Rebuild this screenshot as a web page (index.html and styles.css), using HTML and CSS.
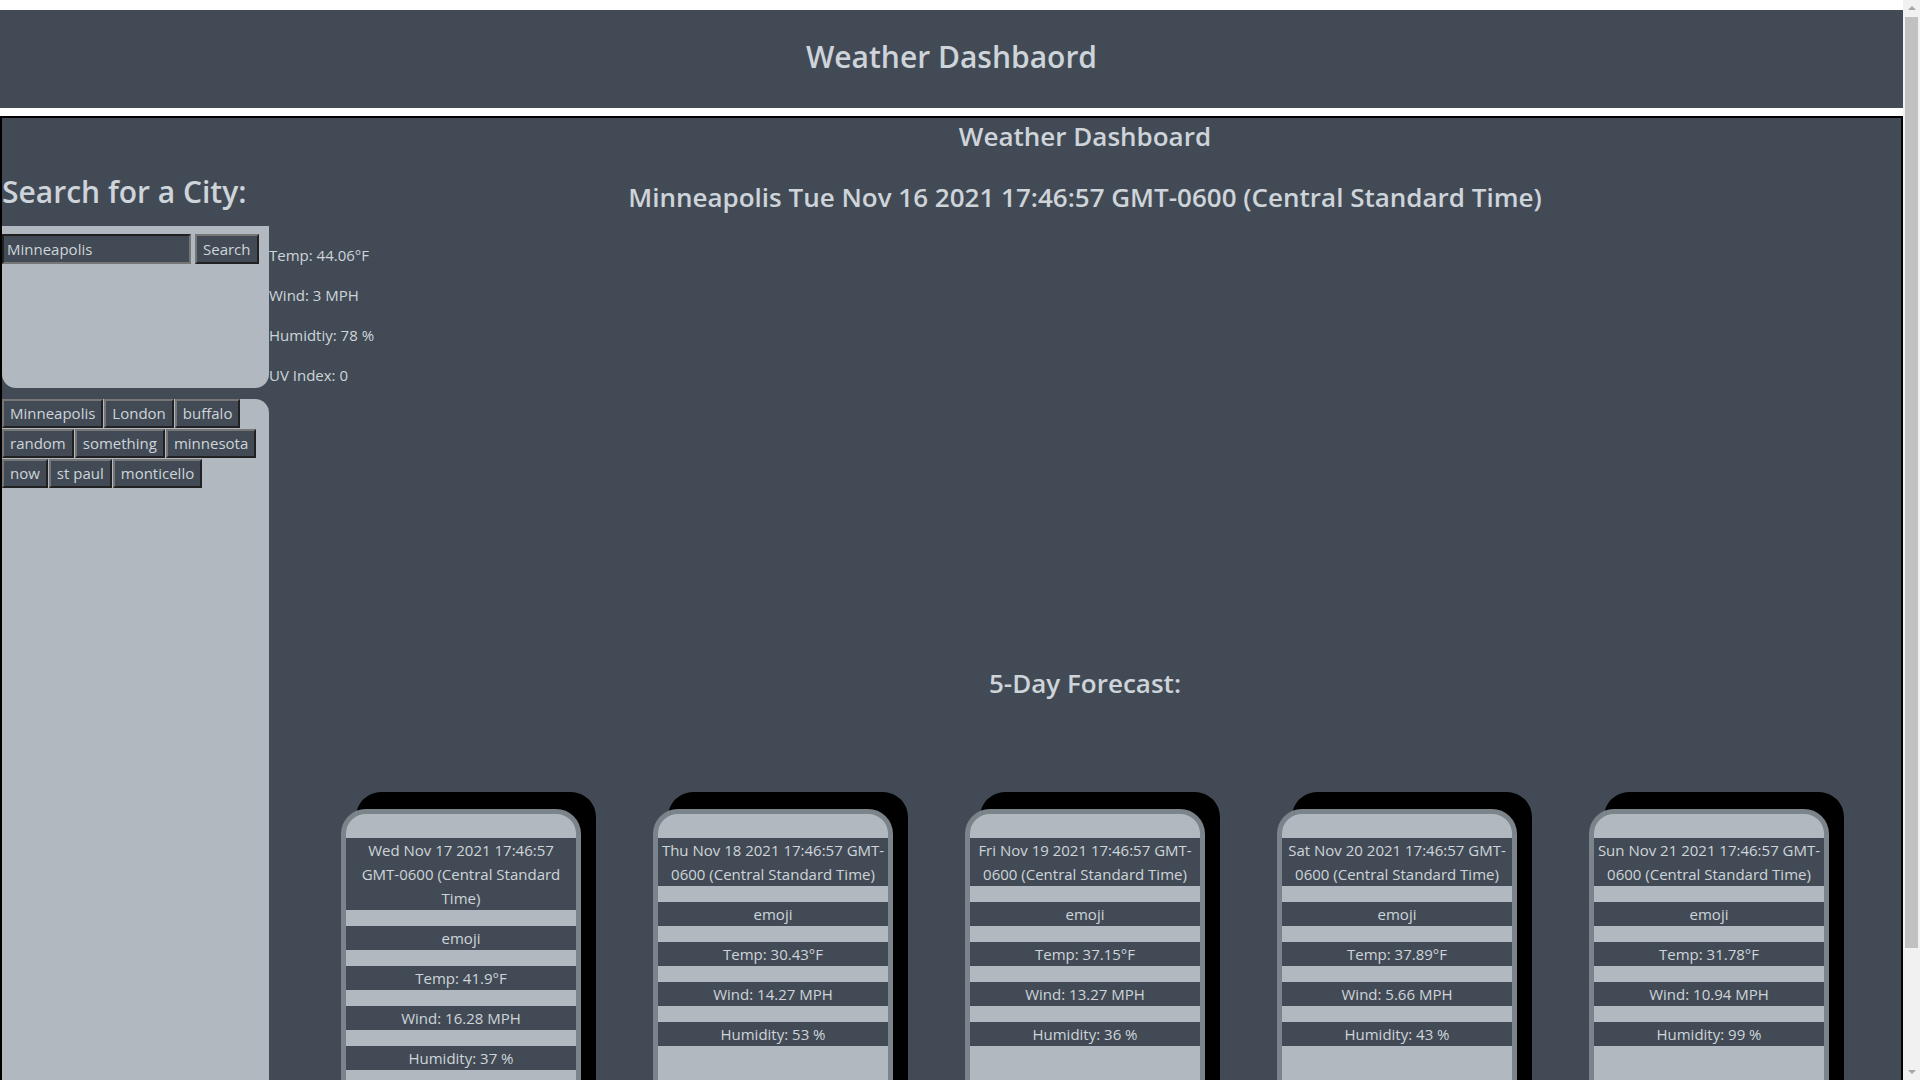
FILE: index.html
```html
<!DOCTYPE html>
<html lang="en">
<head>
<meta charset="utf-8">
<title>Weather Dashbaord</title>
<link rel="stylesheet" href="styles.css">
</head>
<body>
<div class="viewport">
  <div class="page">
    <header class="top"><h1 class="top-title">Weather Dashbaord</h1></header>
    <main class="shell">
      <aside class="side">
        <h2 class="side-title">Search for a City:</h2>
        <div class="search-box">
          <div class="search-row">
            <input class="search-input" type="text" value="Minneapolis">
            <button class="btn search-btn">Search</button>
          </div>
        </div>
        <div class="history">
          <button class="btn">Minneapolis</button>
          <button class="btn">London</button>
          <button class="btn">buffalo</button>
          <button class="btn">random</button>
          <button class="btn">something</button>
          <button class="btn">minnesota</button>
          <button class="btn">now</button>
          <button class="btn">st paul</button>
          <button class="btn">monticello</button>
        </div>
      </aside>
      <section class="content">
        <h3 class="main-title">Weather Dashboard</h3>
        <h3 class="city-title">Minneapolis Tue Nov 16 2021 17:46:57 GMT-0600 (Central Standard Time)</h3>
        <div class="current">
          <p class="stat">Temp: 44.06°F</p>
          <p class="stat">Wind: 3 MPH</p>
          <p class="stat">Humidtiy: 78 %</p>
          <p class="stat">UV Index: 0</p>
        </div>
        <h3 class="forecast-title">5-Day Forecast:</h3>
        <div class="cards">
          <div class="card">
            <p class="row">Wed Nov 17 2021 17:46:57<br>GMT-0600 (Central Standard<br>Time)</p>
            <p class="row">emoji</p>
            <p class="row">Temp: 41.9°F</p>
            <p class="row">Wind: 16.28 MPH</p>
            <p class="row">Humidity: 37 %</p>
          </div>
          <div class="card">
            <p class="row">Thu Nov 18 2021 17:46:57 GMT-<br>0600 (Central Standard Time)</p>
            <p class="row">emoji</p>
            <p class="row">Temp: 30.43°F</p>
            <p class="row">Wind: 14.27 MPH</p>
            <p class="row">Humidity: 53 %</p>
          </div>
          <div class="card">
            <p class="row">Fri Nov 19 2021 17:46:57 GMT-<br>0600 (Central Standard Time)</p>
            <p class="row">emoji</p>
            <p class="row">Temp: 37.15°F</p>
            <p class="row">Wind: 13.27 MPH</p>
            <p class="row">Humidity: 36 %</p>
          </div>
          <div class="card">
            <p class="row">Sat Nov 20 2021 17:46:57 GMT-<br>0600 (Central Standard Time)</p>
            <p class="row">emoji</p>
            <p class="row">Temp: 37.89°F</p>
            <p class="row">Wind: 5.66 MPH</p>
            <p class="row">Humidity: 43 %</p>
          </div>
          <div class="card">
            <p class="row">Sun Nov 21 2021 17:46:57 GMT-<br>0600 (Central Standard Time)</p>
            <p class="row">emoji</p>
            <p class="row">Temp: 31.78°F</p>
            <p class="row">Wind: 10.94 MPH</p>
            <p class="row">Humidity: 99 %</p>
          </div>
        </div>
      </section>
    </main>
  </div>
  <div class="scrollbar">
    <div class="sb-arrow sb-up"></div>
    <div class="sb-track">
      <div class="sb-thumb"></div>
    </div>
    <div class="sb-arrow sb-down"></div>
  </div>
</div>
</body>
</html>
```
FILE: styles.css
```css
html, body {
  margin: 0;
  padding: 0;
  height: 100%;
  overflow: hidden;
}
body {
  background: #ffffff;
  font-family: "Open Sans", "Noto Sans", sans-serif;
  font-size: 15px;
  line-height: 24px;
  color: #ced4da;
}
.viewport {
  display: flex;
  height: 1080px;
}
.page {
  flex: 1;
  min-width: 0;
  height: 1080px;
  overflow: hidden;
  display: flex;
  flex-direction: column;
}
.top {
  flex: none;
  margin-top: 10px;
  height: 98px;
  box-sizing: border-box;
  padding-top: 28px;
  background: #424b55;
  text-align: center;
}
.top-title {
  margin: 0;
  font-size: 30px;
  line-height: 38px;
  font-weight: 600;
  color: #ced4da;
}
.shell {
  flex: none;
  margin-top: 8px;
  border: 2px solid #000;
  border-bottom: 0;
  background: #424b55;
  display: flex;
  min-height: 1200px;
}
.side {
  width: 267px;
  flex: none;
  display: flex;
  flex-direction: column;
}
.side-title {
  margin: 55px 0 15px;
  font-size: 30px;
  line-height: 38px;
  font-weight: 600;
  color: #ced4da;
}
.search-box {
  height: 162px;
  box-sizing: border-box;
  padding-top: 8px;
  background: #b1b8bf;
  border-radius: 0 0 14px 14px;
}
.search-row {
  display: flex;
  align-items: flex-start;
}
.search-input {
  width: 189px;
  height: 30px;
  box-sizing: border-box;
  margin: 0;
  padding: 1px 3px;
  border: 2px inset #767676;
  background: #424b55;
  color: #ced4da;
  font-family: inherit;
  font-size: 15px;
  line-height: 24px;
  outline: none;
}
.btn {
  margin: 0;
  height: 29px;
  box-sizing: border-box;
  padding: 1px 6px;
  border: 2px outset #767676;
  background: #424b55;
  color: #ced4da;
  font-family: inherit;
  font-size: 15px;
  line-height: 23px;
}
.search-btn {
  margin-left: 4px;
  height: 30px;
  padding: 1px 6px;
}
.history {
  margin-top: 11px;
  flex: 1;
  background: #b1b8bf;
  border-radius: 0 14px 0 0;
  display: flex;
  flex-wrap: wrap;
  align-content: flex-start;
  gap: 1px;
}
.content {
  flex: 1;
  min-width: 0;
  display: flex;
  flex-direction: column;
}
.main-title,
.city-title,
.forecast-title {
  font-size: 26px;
  line-height: 34px;
  font-weight: 600;
  text-align: center;
  color: #ced4da;
}
.main-title {
  margin: 1px 0 0;
}
.city-title {
  margin: 27px 0 0;
}
.current {
  margin-top: 29px;
}
.stat {
  margin: 0 0 16px;
  line-height: 24px;
}
.forecast-title {
  margin: 263px 0 0;
}
.cards {
  margin-top: 109px;
  display: flex;
  justify-content: space-evenly;
  align-items: flex-start;
}
.card {
  width: 240px;
  height: 400px;
  box-sizing: border-box;
  border: 5px solid #7c848b;
  border-radius: 25px;
  background: #b1b8bf;
  padding-top: 24px;
  box-shadow: 15px -17px 0 #000;
}
.row {
  margin: 0 0 16px;
  background: #424b55;
  text-align: center;
  line-height: 24px;
  white-space: nowrap;
}
.scrollbar {
  width: 17px;
  flex: none;
  height: 1080px;
  background: #f1f1f1;
  display: flex;
  flex-direction: column;
}
.sb-arrow {
  height: 17px;
  flex: none;
  display: flex;
  align-items: center;
  justify-content: center;
}
.sb-up::before {
  content: "";
  border-left: 4px solid transparent;
  border-right: 4px solid transparent;
  border-bottom: 4px solid #a3a3a3;
  margin-bottom: 1px;
}
.sb-down::before {
  content: "";
  border-left: 4px solid transparent;
  border-right: 4px solid transparent;
  border-top: 4px solid #a3a3a3;
  margin-top: 1px;
}
.sb-track {
  flex: 1;
  padding: 0 2px;
}
.sb-thumb {
  height: 931px;
  background: #c1c1c1;
}
```
